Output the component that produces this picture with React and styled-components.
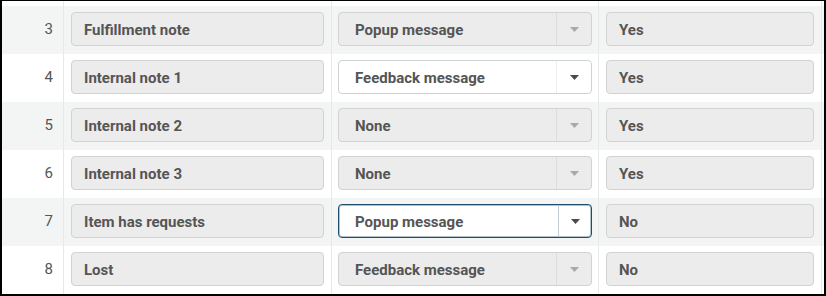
import React from "react";
import styled, { createGlobalStyle, css } from "styled-components";

const GlobalStyle = createGlobalStyle`
    html, body {
        margin: 0;
        padding: 0;
        background: #fff;
    }
    * {
        box-sizing: border-box;
    }
`;

const rows = [
    { n: 3, label: "Fulfillment note", action: "Popup message", active: "Yes", state: "disabled" },
    { n: 4, label: "Internal note 1", action: "Feedback message", active: "Yes", state: "enabled" },
    { n: 5, label: "Internal note 2", action: "None", active: "Yes", state: "disabled" },
    { n: 6, label: "Internal note 3", action: "None", active: "Yes", state: "disabled" },
    { n: 7, label: "Item has requests", action: "Popup message", active: "No", state: "focused" },
    { n: 8, label: "Lost", action: "Feedback message", active: "No", state: "disabled" },
];

const Caret = ({ color }) => (
    <svg width="9" height="5" viewBox="0 0 9 5">
        <path d="M0 0 H9 L4.5 5 Z" fill={color} />
    </svg>
);

const App = () => {
    return (
        <>
            <GlobalStyle />
            <Frame>
                {/* tail of the row above, scrolled out of view */}
                <Row $stub>
                    <NumCell />
                    <Cell />
                    <Cell />
                    <Cell />
                    <Filler />
                </Row>
                {rows.map((row, i) => (
                    <Row key={row.n} $striped={i % 2 === 0}>
                        <NumCell>{row.n}</NumCell>
                        <Cell>
                            <Field>{row.label}</Field>
                        </Cell>
                        <Cell $pad={6}>
                            <Select $state={row.state}>
                                <SelectValue>{row.action}</SelectValue>
                                <SelectArrow $state={row.state}>
                                    <Caret color={row.state === "disabled" ? "#a9a9a9" : "#4a4a4a"} />
                                </SelectArrow>
                            </Select>
                        </Cell>
                        <Cell>
                            <Field>{row.active}</Field>
                        </Cell>
                        <Filler />
                    </Row>
                ))}
            </Frame>
        </>
    );
};

const Frame = styled.div`
    width: 826px;
    height: 296px;
    border: 2px solid #000;
    border-top-width: 1px;
    background: #fff;
    overflow: hidden;
`;

const Row = styled.div`
    display: grid;
    grid-template-columns: 62px 268px 267px 223px 1fr;
    height: ${props => (props.$stub ? "5px" : "48px")};
    background: ${props => (props.$striped ? "#f3f4f4" : "#fff")};
`;

const NumCell = styled.div`
    border-right: 1px solid #e7e8e8;
    padding: 6px 10px 0 0;
    display: flex;
    align-items: flex-start;
    justify-content: flex-end;
    line-height: 35px;
    font-family: Roboto, "Liberation Sans", sans-serif;
    font-size: 15px;
    color: #555;
`;

const Cell = styled.div`
    border-right: 1px solid #e7e8e8;
    padding: 6px ${props => props.$pad ?? 7}px 0;
`;

const Filler = styled.div``;

const Field = styled.div`
    height: 34px;
    border: 1px solid #d2d2d2;
    border-radius: 4px;
    background: #ececec;
    padding: 1px 12px 0;
    display: flex;
    align-items: center;
    font-family: Roboto, "Liberation Sans", sans-serif;
    font-weight: 700;
    font-size: 15px;
    color: #555;
    white-space: nowrap;
`;

const Select = styled.div`
    height: 34px;
    display: flex;
    border-radius: 4px;
    border: 1px solid #d2d2d2;
    background: #ececec;
    overflow: hidden;
    ${props => props.$state === "enabled" && css`
        background: #fff;
        border-color: #cdd2d6;
    `}
    ${props => props.$state === "focused" && css`
        background: #fff;
        border-color: #1d4e6d;
        box-shadow: inset 0 0 0 1px rgba(29, 78, 109, 0.35);
    `}
`;

const SelectValue = styled.div`
    flex: 1;
    display: flex;
    align-items: center;
    padding: 1px 0 0 16px;
    font-family: Roboto, "Liberation Sans", sans-serif;
    font-weight: 700;
    font-size: 15px;
    color: #555;
    white-space: nowrap;
`;

const SelectArrow = styled.div`
    width: ${props => (props.$state === "focused" ? "33px" : "35px")};
    display: flex;
    align-items: center;
    justify-content: center;
    border-left: 1px solid ${props => (props.$state === "focused" ? "#c4cdd4" : props.$state === "enabled" ? "#eeeeee" : "#dcdcdc")};
`;

export default App;
